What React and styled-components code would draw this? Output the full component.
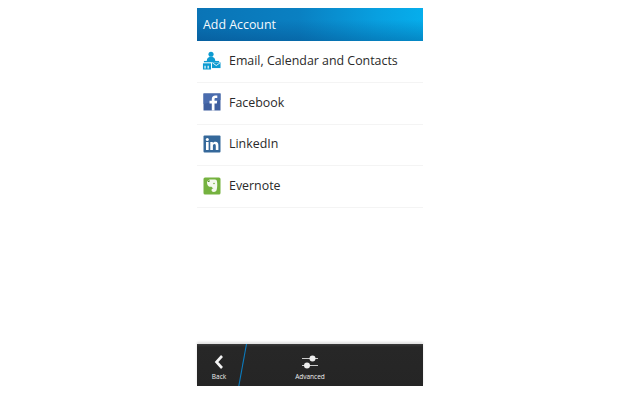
import React from "react";
import styled, { createGlobalStyle } from "styled-components";

const Global = createGlobalStyle`
  html, body { margin: 0; padding: 0; background: #fff; }
  body { font-family: "Open Sans", "Noto Sans", sans-serif; }
`;
const Page = styled.div`
  width: 620px; height: 400px; display: flex; justify-content: center; padding-top: 8px; box-sizing: border-box;
`;
const Phone = styled.div`
  width: 226px; height: 378px; display: flex; flex-direction: column; background: #fff;
`;
const Header = styled.div`
  height: 33px; flex: none; display: flex; align-items: center; padding-left: 6px; box-sizing: border-box;
  background: linear-gradient(180deg, rgba(0,60,120,0) 35%, rgba(0,50,110,.3) 100%), linear-gradient(90deg, #0a74b6 0%, #0a80c2 45%, #08a0e0 80%, #06aeec 100%);
  color: #f4fafd; font-size: 12.4px; font-weight: 500; padding-bottom: 1px;
`;
const List = styled.div`flex: 1; display: flex; flex-direction: column;`;
const Row = styled.div`
  height: 41.75px; flex: none; display: flex; align-items: center; gap: 8px; padding: 0 6px 2px; box-sizing: border-box;
  border-bottom: 1px solid #f4f4f4; color: #2a2a2a; font-size: 12.4px; font-weight: 500;
`;
const IconBox = styled.div`width: 18px; height: 18px; flex: none; display: flex;`;
const ActionBar = styled.div`
  height: 42px; flex: none; position: relative; display: flex; box-sizing: border-box;
  background: linear-gradient(180deg, #3a3a3a 0px, #272727 3px, #252525 100%);
  box-shadow: 0 -2px 2px rgba(0,0,0,.12);
`;
const BackAction = styled.div`
  width: 44px; flex: none; display: flex; flex-direction: column; align-items: center; justify-content: flex-end; padding-bottom: 5px; box-sizing: border-box;
`;
const Action = styled.div`
  width: 44px; margin-left: 47px; flex: none; display: flex; flex-direction: column; align-items: center; justify-content: flex-end; padding-bottom: 5px; box-sizing: border-box;
`;
const ActionLabel = styled.span`color: #f0f0f0; font-size: 6.5px; line-height: 8px; margin-top: 3px; font-weight: 500;`;
const Slash = styled.svg`position: absolute; left: 41px; top: 0;`;

const Email = () => (
  <svg width="20" height="22" viewBox="0 0 20 22" style={{ marginLeft: -1, marginTop: -2 }}>
    <g fill="#0d9bd1">
      <circle cx="9.500" cy="5" r="2.700" />
      <path d="M5 12c0-3 2-4.300 4.500-4.300s4.500 1.300 4.500 4.300z" />
      <rect x="2" y="12" width="16" height="1.400" />
      <rect x="1" y="14.500" width="8.500" height="6.500" />
      <rect x="10.500" y="13.500" width="9" height="6" />
    </g>
    <path d="M11 14l4 2.800 4-2.800" fill="none" stroke="#fff" strokeWidth=".9" />
    <path d="M3.200 17v3M6.500 17v3" stroke="#fff" strokeWidth="1.200" />
  </svg>
);
const Facebook = () => (
  <svg width="18" height="18" viewBox="0 0 18 18">
    <rect width="17" height="17" y=".5" x=".5" fill="#3f5f9f" />
    <path d="M.5 11 17.500 7V.5H.5z" fill="#4a6cae" />
    <path d="M11.500 17.500v-7h2.300l.4-2.700h-2.700V6.200c0-.8.300-1.300 1.400-1.300h1.400V2.500c-.3 0-1.100-.1-2-.1-2.100 0-3.500 1.200-3.500 3.500v1.900H6.500v2.700h2.300v7z" fill="#fff" />
  </svg>
);
const LinkedIn = () => (
  <svg width="18" height="18" viewBox="0 0 18 18">
    <rect x=".5" y=".5" width="17" height="17" rx="1" fill="#35689a" />
    <rect x="3" y="7" width="2.600" height="8" fill="#fff" />
    <circle cx="4.300" cy="4.600" r="1.500" fill="#fff" />
    <path d="M7.300 7h2.500v1.200c.5-.8 1.400-1.400 2.600-1.400 2.200 0 3 1.400 3 3.600V15h-2.600v-4.100c0-1.100-.3-1.900-1.300-1.900s-1.600.8-1.600 1.900V15H7.300z" fill="#fff" />
  </svg>
);
const Evernote = () => (
  <svg width="18" height="18" viewBox="0 0 18 18">
    <rect x=".5" y=".5" width="17" height="17" rx="1.500" fill="#75b23f" />
    <path d="M4 4.500 6.500 2.500h5.500c1.300 0 1.800.7 2 2 .4 2.500.3 5.500-.2 7.800-.3 1.700-1.300 2.700-3 2.700-1.400 0-2.300-.7-2.300-1.900 0-1.100.9-1.700 2.200-1.600-.9-.3-1.700-1.200-2.200-1.800-1.500 0-3 0-3.500-1C4 7.500 4 6 4 4.500z" fill="#f4f9ee" />
    <path d="M6.500 2.800v2.200H4.300z" fill="#4d8a26" />
    <circle cx="11" cy="6.500" r=".8" fill="#75b23f" />
  </svg>
);

const rows = [
  ["Email, Calendar and Contacts", <Email />],
  ["Facebook", <Facebook />],
  ["LinkedIn", <LinkedIn />],
  ["Evernote", <Evernote />],
];

export default function App() {
  return (
    <Page>
      <Global />
      <Phone>
        <Header>Add Account</Header>
        <List>
          {rows.map(([label, icon]) => (
            <Row key={label}>
              <IconBox>{icon}</IconBox>
              <span>{label}</span>
            </Row>
          ))}
        </List>
        <ActionBar>
          <BackAction>
            <svg width="10" height="16" viewBox="0 0 10 16">
              <path d="M8 2 2.500 8 8 14" fill="none" stroke="#f4f4f4" strokeWidth="2.600" />
            </svg>
            <ActionLabel>Back</ActionLabel>
          </BackAction>
          <Slash width="12" height="42" viewBox="0 0 12 42">
            <path d="M8.500 0 .8 42" stroke="#0b7cc0" strokeWidth="1.100" fill="none" />
          </Slash>
          <Action>
            <svg width="18" height="16" viewBox="0 0 18 16">
              <path d="M1 4.500h16M1 11.500h16" stroke="#ccc" strokeWidth="1.100" />
              <circle cx="11.500" cy="4.500" r="3" fill="#eee" />
              <circle cx="6" cy="11.500" r="3" fill="#eee" />
            </svg>
            <ActionLabel>Advanced</ActionLabel>
          </Action>
        </ActionBar>
      </Phone>
    </Page>
  );
}
